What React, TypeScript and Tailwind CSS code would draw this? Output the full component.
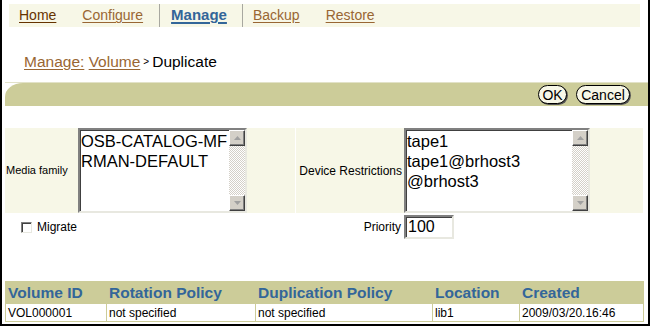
import React from "react";

const ScrollBtn = ({ dir }: { dir: "up" | "down" }) => (
  <div className="flex h-[16px] w-[16px] items-center justify-center border border-t-white border-l-white border-b-[#404040] border-r-[#404040] bg-[#d4d0c8] shadow-[inset_-1px_-1px_0_#808080]">
    <svg width="7" height="4" viewBox="0 0 7 4">
      {dir === "up" ? (
        <path d="M3.5 0 L7 4 L0 4 Z" fill="#a0a0a0" />
      ) : (
        <path d="M0 0 L7 0 L3.5 4 Z" fill="#a0a0a0" />
      )}
    </svg>
  </div>
);

const ListBox = ({ items, width }: { items: string[]; width: string }) => (
  <div
    className={`flex h-full ${width} border-2 border-t-[#808080] border-l-[#808080] border-b-[#e8e8e0] border-r-[#e8e8e0] bg-white shadow-[inset_1px_1px_0_#404040]`}
  >
    <div className="flex-1 pl-[1px] pt-[1px] text-[16.5px] leading-[20px] text-black">
      {items.map((it) => (
        <div key={it} className="whitespace-nowrap">
          {it}
        </div>
      ))}
    </div>
    <div className="flex h-full w-[16px] flex-col">
      <ScrollBtn dir="up" />
      <div className="flex-1 bg-[image:repeating-conic-gradient(#d4d0c8_0_25%,#ffffff_0_50%)] bg-[length:2px_2px]" />
      <ScrollBtn dir="down" />
    </div>
  </div>
);

const cols = "grid grid-cols-[101px_149px_177px_87px_125px]";

export default function App() {
  return (
    <div className="h-[326px] w-[650px] overflow-hidden border-x-2 border-b-2 border-black bg-white font-['Liberation_Sans',Arial,sans-serif]">
      {/* tabs */}
      <div className="ml-[7px] mt-[4px] flex h-[23px] w-[631px] items-stretch bg-[#f7f7e7] text-[14px]">
        <div className="flex items-center pl-[10px]">
          <span className="text-[#663300] underline decoration-[#663300] underline-offset-2">Home</span>
        </div>
        <div className="ml-[26px] flex items-center">
          <span className="text-[#996633] underline underline-offset-2">Configure</span>
        </div>
        <div className="ml-[16px] w-px bg-[#a8a8a0]" />
        <div className="ml-[11px] flex items-center">
          <span className="text-[15px] font-bold text-[#336699] underline decoration-2 underline-offset-2">Manage</span>
        </div>
        <div className="ml-[15px] w-px bg-[#a8a8a0]" />
        <div className="ml-[10px] flex items-center">
          <span className="text-[#996633] underline underline-offset-2">Backup</span>
        </div>
        <div className="ml-[26px] flex items-center">
          <span className="text-[#996633] underline underline-offset-2">Restore</span>
        </div>
      </div>

      {/* breadcrumb */}
      <div className="ml-[22px] mt-[26px] flex h-[18px] items-center text-[15.5px] leading-[18px]">
        <span className="text-[#996633] underline underline-offset-2">Manage:</span>
        <span>&nbsp;</span>
        <span className="text-[#996633] underline underline-offset-2">Volume</span>
        <span className="mx-[3px] text-[10px] text-black">&gt;</span>
        <span className="text-black">Duplicate</span>
      </div>

      {/* olive bar */}
      <div className="ml-[3px] mt-[11px] h-[24px] border-t border-[#e2e2c8]">
        <div className="flex h-[23px] items-center justify-end gap-[9px] rounded-tl-[18px_14px] bg-[#cccc99] pr-[18px]">
          <button className="flex h-[19px] w-[29px] items-center justify-center rounded-full border border-black bg-[#f7f7e7] text-[14px] leading-none text-black shadow-[1px_1px_0_#555]">
            OK
          </button>
          <button className="flex h-[19px] w-[54px] items-center justify-center rounded-full border border-black bg-[#f7f7e7] text-[14px] leading-none text-black shadow-[1px_1px_0_#555]">
            Cancel
          </button>
        </div>
      </div>

      {/* form row */}
      <div className="ml-[3px] mt-[22px] grid h-[85px] grid-cols-[72px_218px_1px_107px_240px] text-[12px] text-black">
        <div className="flex items-center bg-[#f7f7e7] pl-[1px] text-[11px]">Media family</div>
        <div className="bg-[#f7f7e7] pl-[1px]">
          <ListBox items={["OSB-CATALOG-MF", "RMAN-DEFAULT"]} width="w-[169px]" />
        </div>
        <div className="bg-white" />
        <div className="flex items-center justify-end bg-[#f7f7e7] pr-[1px]">Device Restrictions</div>
        <div className="bg-[#f7f7e7] pl-[1px]">
          <ListBox items={["tape1", "tape1@brhost3", "@brhost3"]} width="w-[186px]" />
        </div>
      </div>

      {/* migrate / priority */}
      <div className="ml-[3px] mt-[2px] grid h-[24px] grid-cols-[72px_218px_1px_107px_240px] text-[12px] text-black">
        <div className="col-span-2 flex items-center pl-[16px]">
          <div className="h-[11px] w-[11px] border border-t-[#808080] border-l-[#808080] border-b-[#e8e8e0] border-r-[#e8e8e0] bg-white shadow-[inset_1px_1px_0_#404040]" />
          <span className="ml-[5px]">Migrate</span>
        </div>
        <div />
        <div className="flex items-center justify-end pr-[2px]">Priority</div>
        <div className="pl-[1px]">
          <div className="flex h-[24px] w-[50px] items-center border-2 border-t-[#808080] border-l-[#808080] border-b-[#e8e8e0] border-r-[#e8e8e0] bg-white pl-[2px] text-[16px] shadow-[inset_1px_1px_0_#404040]">
            100
          </div>
        </div>
      </div>

      {/* table */}
      <div className="ml-[3px] mt-[42px] w-[639px]">
        <div className={`${cols} h-[23px] bg-[#cccc99] text-[15.5px] font-bold text-[#336699]`}>
          {["Volume ID", "Rotation Policy", "Duplication Policy", "Location", "Created"].map((h) => (
            <div key={h} className="flex items-center whitespace-nowrap pl-[3px]">
              {h}
            </div>
          ))}
        </div>
        <div className={`${cols} h-[18px] border-b border-r border-[#cccc99] text-[12px] text-black`}>
          {["VOL000001", "not specified", "not specified", "lib1", "2009/03/20.16:46"].map((c, i) => (
            <div key={i} className="flex items-center whitespace-nowrap border-l border-[#cccc99] pl-[2px]">
              {c}
            </div>
          ))}
        </div>
      </div>
    </div>
  );
}
